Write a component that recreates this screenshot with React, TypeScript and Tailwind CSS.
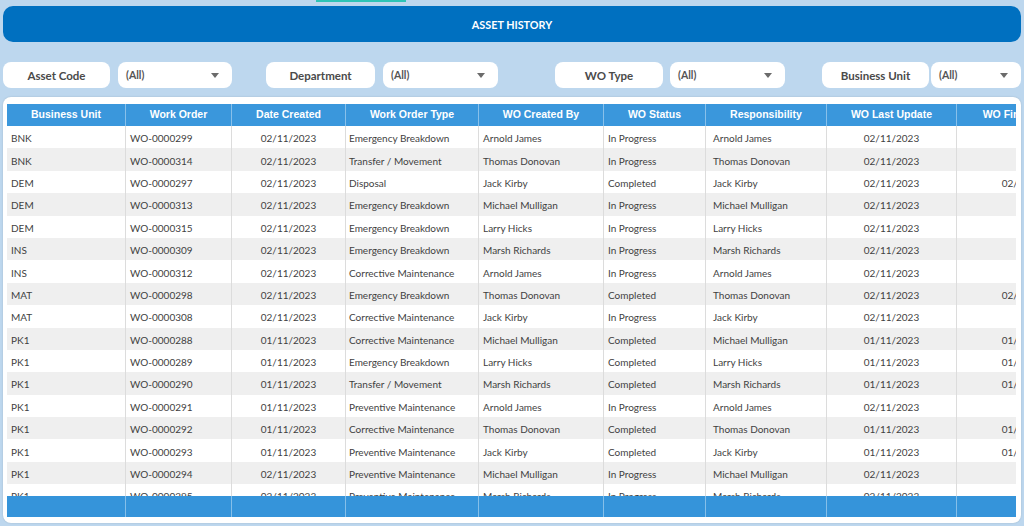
import React from 'react';

type Row = {
    unit: string;
    wo: string;
    created: string;
    type: string;
    by: string;
    status: string;
    resp: string;
    updated: string;
    finished: string;
};

const rows: Row[] = [
    { unit: 'BNK', wo: 'WO-0000299', created: '02/11/2023', type: 'Emergency Breakdown', by: 'Arnold James', status: 'In Progress', resp: 'Arnold James', updated: '02/11/2023', finished: '' },
    { unit: 'BNK', wo: 'WO-0000314', created: '02/11/2023', type: 'Transfer / Movement', by: 'Thomas Donovan', status: 'In Progress', resp: 'Thomas Donovan', updated: '02/11/2023', finished: '' },
    { unit: 'DEM', wo: 'WO-0000297', created: '02/11/2023', type: 'Disposal', by: 'Jack Kirby', status: 'Completed', resp: 'Jack Kirby', updated: '02/11/2023', finished: '02/11/2023' },
    { unit: 'DEM', wo: 'WO-0000313', created: '02/11/2023', type: 'Emergency Breakdown', by: 'Michael Mulligan', status: 'In Progress', resp: 'Michael Mulligan', updated: '02/11/2023', finished: '' },
    { unit: 'DEM', wo: 'WO-0000315', created: '02/11/2023', type: 'Emergency Breakdown', by: 'Larry Hicks', status: 'In Progress', resp: 'Larry Hicks', updated: '02/11/2023', finished: '' },
    { unit: 'INS', wo: 'WO-0000309', created: '02/11/2023', type: 'Emergency Breakdown', by: 'Marsh Richards', status: 'In Progress', resp: 'Marsh Richards', updated: '02/11/2023', finished: '' },
    { unit: 'INS', wo: 'WO-0000312', created: '02/11/2023', type: 'Corrective Maintenance', by: 'Arnold James', status: 'In Progress', resp: 'Arnold James', updated: '02/11/2023', finished: '' },
    { unit: 'MAT', wo: 'WO-0000298', created: '02/11/2023', type: 'Emergency Breakdown', by: 'Thomas Donovan', status: 'Completed', resp: 'Thomas Donovan', updated: '02/11/2023', finished: '02/11/2023' },
    { unit: 'MAT', wo: 'WO-0000308', created: '02/11/2023', type: 'Corrective Maintenance', by: 'Jack Kirby', status: 'In Progress', resp: 'Jack Kirby', updated: '02/11/2023', finished: '' },
    { unit: 'PK1', wo: 'WO-0000288', created: '01/11/2023', type: 'Corrective Maintenance', by: 'Michael Mulligan', status: 'Completed', resp: 'Michael Mulligan', updated: '01/11/2023', finished: '01/11/2023' },
    { unit: 'PK1', wo: 'WO-0000289', created: '01/11/2023', type: 'Emergency Breakdown', by: 'Larry Hicks', status: 'Completed', resp: 'Larry Hicks', updated: '01/11/2023', finished: '01/11/2023' },
    { unit: 'PK1', wo: 'WO-0000290', created: '01/11/2023', type: 'Transfer / Movement', by: 'Marsh Richards', status: 'Completed', resp: 'Marsh Richards', updated: '01/11/2023', finished: '01/11/2023' },
    { unit: 'PK1', wo: 'WO-0000291', created: '01/11/2023', type: 'Preventive Maintenance', by: 'Arnold James', status: 'In Progress', resp: 'Arnold James', updated: '02/11/2023', finished: '' },
    { unit: 'PK1', wo: 'WO-0000292', created: '01/11/2023', type: 'Corrective Maintenance', by: 'Thomas Donovan', status: 'Completed', resp: 'Thomas Donovan', updated: '01/11/2023', finished: '01/11/2023' },
    { unit: 'PK1', wo: 'WO-0000293', created: '01/11/2023', type: 'Preventive Maintenance', by: 'Jack Kirby', status: 'Completed', resp: 'Jack Kirby', updated: '01/11/2023', finished: '01/11/2023' },
    { unit: 'PK1', wo: 'WO-0000294', created: '02/11/2023', type: 'Preventive Maintenance', by: 'Michael Mulligan', status: 'In Progress', resp: 'Michael Mulligan', updated: '02/11/2023', finished: '' },
    { unit: 'PK1', wo: 'WO-0000295', created: '02/11/2023', type: 'Preventive Maintenance', by: 'Marsh Richards', status: 'In Progress', resp: 'Marsh Richards', updated: '02/11/2023', finished: '' },
];

const columns: { key: keyof Row; label: string; width: string; align: string }[] = [
    { key: 'unit', label: 'Business Unit', width: 'w-[119px]', align: 'justify-start pl-[4px]' },
    { key: 'wo', label: 'Work Order', width: 'w-[106px]', align: 'justify-start pl-[4px]' },
    { key: 'created', label: 'Date Created', width: 'w-[114px]', align: 'justify-center' },
    { key: 'type', label: 'Work Order Type', width: 'w-[133px]', align: 'justify-start pl-[3px]' },
    { key: 'by', label: 'WO Created By', width: 'w-[125px]', align: 'justify-start pl-[4px]' },
    { key: 'status', label: 'WO Status', width: 'w-[102px]', align: 'justify-start pl-[4px]' },
    { key: 'resp', label: 'Responsibility', width: 'w-[121px]', align: 'justify-start pl-[7px]' },
    { key: 'updated', label: 'WO Last Update', width: 'w-[130px]', align: 'justify-center' },
    { key: 'finished', label: 'WO Finish Date', width: 'w-[130px]', align: 'justify-center pl-[16px]' },
];

const Caret = () => (
    <svg width="8" height="5" viewBox="0 0 8 5" className="shrink-0">
        <path d="M0 0 L8 0 L4 5 Z" fill="#6b6b6b" />
    </svg>
);

const Filter: React.FC<{ label: string; labelW: string; dropW: string; gap: string; lead: string }> = ({ label, labelW, dropW, gap, lead }) => (
    <div className={`flex items-center ${lead} ${gap}`}>
        <div className={`${labelW} h-[26px] bg-white rounded-lg flex items-center justify-center pt-[2px] text-[11.5px] font-bold text-[#4a4a4a]`}>
            {label}
        </div>
        <div className={`${dropW} h-[26px] bg-white rounded-lg flex items-center justify-between pl-[8px] pr-[13px] text-[10.5px] font-bold text-[#555]`}>
            <span className="pt-[1px]">(All)</span>
            <Caret />
        </div>
    </div>
);

export default function App() {
    return (
        <div className="w-[1024px] h-[526px] overflow-hidden bg-[#bdd7ee] font-['Lato',sans-serif]">
            <div className="ml-[316px] w-[90px] h-[2px] bg-[#2ec4b6]" />

            <div className="mx-[3px] mt-[4px] h-[36px] rounded-[10px] bg-[#0070c0] flex items-center justify-center pt-[3px] text-white text-[10.8px] font-bold">
                ASSET HISTORY
            </div>

            <div className="flex items-center mt-[20px] pl-[3px]">
                <Filter label="Asset Code" labelW="w-[107px]" dropW="w-[114px]" gap="gap-[8px]" lead="" />
                <Filter label="Department" labelW="w-[109px]" dropW="w-[115px]" gap="gap-[8px]" lead="ml-[34px]" />
                <Filter label="WO Type" labelW="w-[108px]" dropW="w-[115px]" gap="gap-[7px]" lead="ml-[57px]" />
                <Filter label="Business Unit" labelW="w-[107px]" dropW="w-[90px]" gap="gap-[2px]" lead="ml-[37px]" />
            </div>

            <div className="mx-[3px] mt-[9px] h-[426px] bg-white rounded-lg pt-[7px] pl-[4px] pr-[5px] pb-[6px] shadow-[0_0_2px_rgba(0,0,0,0.15)]">
                <div className="w-full h-full overflow-hidden flex flex-col">
                    <div className="flex h-[22px] shrink-0 bg-[#3a97dc]">
                        {columns.map(c => (
                            <div key={c.key} className={`${c.width} shrink-0 h-full flex items-center justify-center border-r border-white/40 text-white text-[10.5px] font-bold font-['Liberation_Sans',Arial,sans-serif] whitespace-nowrap`}>
                                {c.label}
                            </div>
                        ))}
                    </div>
                    <div className="h-[370px] shrink-0 overflow-hidden">
                        {rows.map((r, i) => (
                            <div key={r.wo} className={`flex h-[22.4px] ${i % 2 === 1 ? 'bg-[#efefef]' : 'bg-white'}`}>
                                {columns.map(c => (
                                    <div key={c.key} className={`${c.width} shrink-0 h-full flex items-center pt-[3px] ${c.align} border-r border-[#dcdcdc] text-[10px] text-[#3f3f3f] whitespace-nowrap`}>
                                        {r[c.key]}
                                    </div>
                                ))}
                            </div>
                        ))}
                    </div>
                    <div className="flex h-[21px] shrink-0 bg-[#3594da]">
                        {columns.map(c => (
                            <div key={c.key} className={`${c.width} shrink-0 h-full border-r border-white/40`} />
                        ))}
                    </div>
                </div>
            </div>
        </div>
    );
}
